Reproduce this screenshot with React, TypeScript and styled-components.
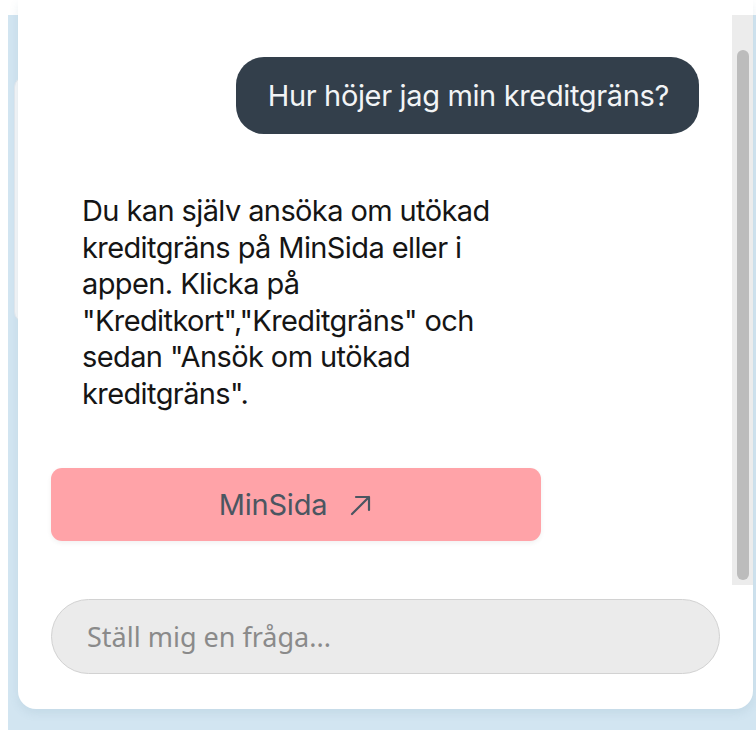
import React from "react";
import styled, { createGlobalStyle } from "styled-components";

const GlobalStyle = createGlobalStyle`
  html, body {
    margin: 0;
    padding: 0;
    background: #ffffff;
  }
  body {
    font-family: "Inter", "Liberation Sans", sans-serif;
  }
`;

const Page = styled.div`
  padding-left: 8px;
  width: 756px;
  height: 737px;
  box-sizing: border-box;
`;

const Frame = styled.div`
  position: relative;
  height: 730px;
  box-sizing: border-box;
  padding: 0 3px 21px 10px;
  background: linear-gradient(to bottom, #ffffff 0 15px, #d2e5f1 15px);
  display: flex;
`;

const BackCard = styled.div`
  position: absolute;
  left: 6px;
  top: 77px;
  width: 60px;
  height: 243px;
  border-radius: 10px;
  background: #f4f6f8;
  border: 1px solid #e4e9ee;
`;

const Panel = styled.section`
  position: relative;
  z-index: 1;
  flex: 1;
  display: flex;
  flex-direction: column;
  background: #ffffff;
  border-radius: 0 0 18px 18px;
  box-shadow: 0 4px 10px rgba(90, 130, 160, 0.12);
`;

const ScrollRow = styled.div`
  display: flex;
  height: 585px;
`;

const Messages = styled.div`
  flex: 1;
  display: flex;
  flex-direction: column;
  padding: 57px 33px 0 33px;
`;

const UserBubble = styled.div`
  align-self: flex-end;
  height: 77px;
  display: flex;
  align-items: center;
  padding: 0 30px 0 32px;
  border-radius: 28px;
  background: #333f4b;
  color: #f2f4f6;
  font-size: 29px;
  letter-spacing: -0.35px;
`;

const BotText = styled.p`
  margin: 59px 0 0 31px;
  width: 450px;
  font-size: 29px;
  line-height: 36.5px;
  letter-spacing: -0.6px;
  color: #151515;
`;

const LinkButton = styled.button`
  margin-top: 56px;
  width: 490px;
  height: 73px;
  display: flex;
  align-items: center;
  justify-content: center;
  gap: 22px;
  border: none;
  border-radius: 11px;
  background: #ffa3a8;
  box-shadow: 0 2px 5px rgba(0, 0, 0, 0.06);
  color: #4b5661;
  font-family: "Inter", "Liberation Sans", sans-serif;
  font-size: 29px;
  letter-spacing: -0.2px;
  cursor: pointer;
`;

const ArrowIcon = styled.svg`
  width: 24px;
  height: 24px;
  flex: none;
`;

const ScrollTrack = styled.div`
  width: 21px;
  margin-top: 15px;
  background: #ececec;
  display: flex;
  justify-content: center;
  padding: 35px 0 5px;
  box-sizing: border-box;
`;

const ScrollThumb = styled.div`
  width: 12px;
  height: 100%;
  border-radius: 6px;
  background: #bcbcbc;
`;

const InputRow = styled.div`
  padding: 14px 33px 0 33px;
`;

const QuestionInput = styled.input`
  width: 669px;
  height: 75px;
  box-sizing: border-box;
  border: 1px solid #d2d2d2;
  border-radius: 38px;
  background: #ebebeb;
  padding: 0 0 0 35px;
  font-family: "Noto Sans", "Open Sans", sans-serif;
  font-size: 27px;
  color: #333;
  outline: none;

  &::placeholder {
    color: #8a8a8a;
  }
`;

export default function App() {
  return (
    <Page>
      <GlobalStyle />
      <Frame>
        <BackCard />
        <Panel>
          <ScrollRow>
            <Messages>
              <UserBubble>Hur höjer jag min kreditgräns?</UserBubble>
              <BotText>
                Du kan själv ansöka om utökad kreditgräns på MinSida eller i
                appen. Klicka på "Kreditkort","Kreditgräns" och sedan "Ansök om
                utökad kreditgräns".
              </BotText>
              <LinkButton>
                MinSida
                <ArrowIcon viewBox="0 0 24 24" fill="none" stroke="currentColor" strokeWidth="2.2" strokeLinecap="round" strokeLinejoin="round">
                  <path d="M3 21 L20 4 M7 4 H20 V17" />
                </ArrowIcon>
              </LinkButton>
            </Messages>
            <ScrollTrack>
              <ScrollThumb />
            </ScrollTrack>
          </ScrollRow>
          <InputRow>
            <QuestionInput placeholder="Ställ mig en fråga..." />
          </InputRow>
        </Panel>
      </Frame>
    </Page>
  );
}
